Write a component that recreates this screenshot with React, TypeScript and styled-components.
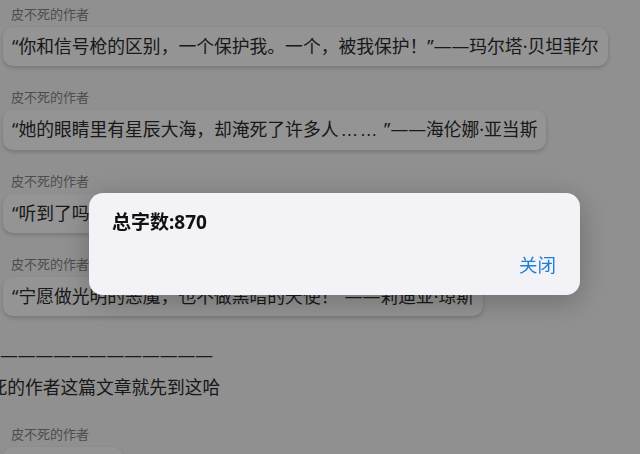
import React from 'react';
import styled, { createGlobalStyle } from 'styled-components';

const GlobalStyle = createGlobalStyle`
  html, body {
    margin: 0;
    padding: 0;
    background: #f8f8f8;
    font-family: "Noto Sans", "Noto Sans CJK SC", sans-serif;
  }
`;

const Ellipsis = styled.span`
  font-family: "Liberation Sans", sans-serif;
  letter-spacing: 1.5px;
  padding: 0 5px 0 2px;
`;

const quotes: { author: string; text: React.ReactNode }[] = [
  { author: '皮不死的作者', text: '“你和信号枪的区别，一个保护我。一个，被我保护！”——玛尔塔·贝坦菲尔' },
  {
    author: '皮不死的作者',
    text: (
      <>
        “她的眼睛里有星辰大海，却淹死了许多人<Ellipsis>……</Ellipsis>”——海伦娜·亚当斯
      </>
    ),
  },
  { author: '皮不死的作者', text: '“听到了吗？那是心跳的声音。”——艾玛·伍兹' },
  { author: '皮不死的作者', text: '“宁愿做光明的恶魔，也不做黑暗的天使！”——莉迪亚·琼斯' },
];

const App: React.FC = () => {
  return (
    <>
      <GlobalStyle />
      <Page>
        {quotes.map((q, i) => (
          <Message key={i}>
            <Author>{q.author}</Author>
            <Bubble>{q.text}</Bubble>
          </Message>
        ))}
        <Divider>————————————</Divider>
        <Closing>皮不死的作者这篇文章就先到这哈</Closing>
        <Message>
          <Author>皮不死的作者</Author>
          <Bubble>“后会有期啊”</Bubble>
        </Message>
      </Page>
      <Overlay>
        <Dialog>
          <DialogTitle>总字数:870</DialogTitle>
          <DialogActions>
            <CloseButton>关闭</CloseButton>
          </DialogActions>
        </Dialog>
      </Overlay>
    </>
  );
};

export default App;

const Page = styled.div`
  height: 454px;
  overflow: hidden;
  padding-top: 5px;
  box-sizing: border-box;
`;

const Message = styled.div`
  display: flex;
  flex-direction: column;
  align-items: flex-start;
  margin-bottom: 22px;
`;

const Author = styled.div`
  font-size: 13px;
  line-height: 18px;
  color: #858585;
  padding-left: 11px;
  margin-bottom: 4px;
`;

const Bubble = styled.div`
  margin-left: 3px;
  padding: 7px 9px;
  background: #ffffff;
  border-radius: 10px;
  box-shadow: 0 2px 4px rgba(0, 0, 0, 0.18);
  font-size: 17.8px;
  line-height: 25px;
  color: #2b2b2b;
  white-space: nowrap;
`;

const Divider = styled.div`
  margin-top: 24px;
  font-size: 17.75px;
  line-height: 30px;
  color: #2b2b2b;
  white-space: nowrap;
`;

const Closing = styled.div`
  margin-left: -46px;
  margin-top: 1px;
  font-size: 17.75px;
  line-height: 32px;
  color: #2b2b2b;
  white-space: nowrap;
  margin-bottom: 22px;
`;

const Overlay = styled.div`
  position: fixed;
  inset: 0;
  background: rgba(0, 0, 0, 0.42);
`;

const Dialog = styled.div`
  position: absolute;
  left: 89px;
  top: 193px;
  width: 491px;
  height: 102px;
  box-sizing: border-box;
  background: #f2f2f7;
  border-radius: 14px;
  box-shadow: 0 6px 30px rgba(0, 0, 0, 0.25);
  padding: 15px 24px 0 23px;
  display: flex;
  flex-direction: column;
`;

const DialogTitle = styled.div`
  font-size: 19px;
  font-weight: 700;
  line-height: 28px;
  color: #111111;
`;

const DialogActions = styled.div`
  display: flex;
  justify-content: flex-end;
  margin-top: 16px;
`;

const CloseButton = styled.div`
  font-size: 18.5px;
  line-height: 26px;
  color: #1b7fd8;
`;
